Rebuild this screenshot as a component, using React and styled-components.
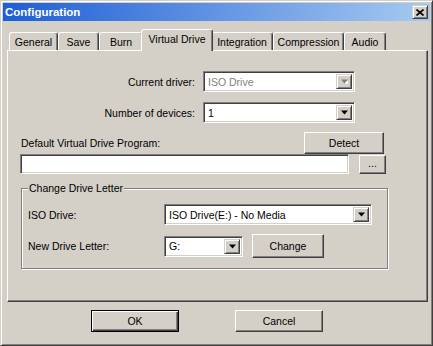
import React from 'react';
import styled, { createGlobalStyle, css } from 'styled-components';

const Global = createGlobalStyle`
  body {
    margin: 0;
    background: #d4d0c8;
  }
`;

const raised = css`
  border: 1px solid;
  border-color: #d4d0c8 #404040 #404040 #d4d0c8;
  box-shadow: inset 1px 1px 0 #fff, inset -1px -1px 0 #808080;
`;

const sunken = css`
  border: 1px solid;
  border-color: #808080 #fff #fff #808080;
  box-shadow: inset 1px 1px 0 #404040, inset -1px -1px 0 #d4d0c8;
`;

const Window = styled.div`
  box-sizing: border-box;
  width: 433px;
  height: 346px;
  padding: 2px;
  display: flex;
  flex-direction: column;
  background: #d4d0c8;
  ${raised};
  font-family: 'Liberation Sans', Arial, sans-serif;
  font-size: 10.5px;
  color: #000;
`;

const TitleBar = styled.div`
  height: 18px;
  display: flex;
  align-items: center;
  justify-content: space-between;
  padding: 0 2px;
  background: linear-gradient(to right, #1d5ed6, #a6caf0);
`;

const Title = styled.span`
  color: #fff;
  font-weight: bold;
  font-size: 11.5px;
`;

const CloseButton = styled.div`
  box-sizing: border-box;
  width: 16px;
  height: 14px;
  display: flex;
  align-items: center;
  justify-content: center;
  background: #d4d0c8;
  ${raised};
`;

const Body = styled.div`
  padding: 8px 2px 0 4px;
  display: flex;
  flex-direction: column;
`;

const TabStrip = styled.div`
  position: relative;
  z-index: 2;
  height: 21px;
  display: flex;
  align-items: flex-end;
  padding-left: 2px;
`;

const Tab = styled.div`
  box-sizing: border-box;
  position: relative;
  width: ${(p) => p.$w}px;
  height: 18px;
  display: flex;
  align-items: center;
  justify-content: center;
  background: #d4d0c8;
  border-top: 1px solid #fff;
  border-left: 1px solid #fff;
  border-right: 1px solid #404040;
  border-radius: 3px 3px 0 0;
  box-shadow: inset -1px 0 0 #808080;
  white-space: nowrap;
  ${(p) =>
    p.$active &&
    css`
      z-index: 1;
      width: ${p.$w + 4}px;
      height: 22px;
      margin: 0 -2px -1px;
      padding-bottom: 3px;
    `}
`;

const Panel = styled.div`
  box-sizing: border-box;
  width: 421px;
  height: 252px;
  padding: 20px 0 0 12px;
  display: flex;
  flex-direction: column;
  border: 1px solid;
  border-color: #fff #404040 #404040 #fff;
  box-shadow: inset -1px -1px 0 #808080;
`;

const FieldRow = styled.div`
  height: 21px;
  display: flex;
  align-items: center;
  margin-top: ${(p) => p.$top || 0}px;
`;

const RightLabel = styled.span`
  width: 175px;
  margin-right: 8px;
  text-align: right;
`;

const Combo = styled.div`
  box-sizing: border-box;
  width: ${(p) => p.$w}px;
  height: 21px;
  padding: 2px;
  display: flex;
  background: #fff;
  ${sunken};
`;

const ComboValue = styled.span`
  flex: 1;
  padding-left: 2px;
  display: flex;
  align-items: center;
  color: ${(p) => (p.$disabled ? '#808080' : '#000')};
`;

const ArrowButton = styled.div`
  box-sizing: border-box;
  width: 16px;
  display: flex;
  align-items: center;
  justify-content: center;
  background: #d4d0c8;
  ${raised};
`;

const ProgramRow = styled.div`
  width: 364px;
  height: 22px;
  margin-top: 9px;
  display: flex;
  align-items: center;
  justify-content: space-between;
`;

const PlainLabel = styled.span`
  padding-left: ${(p) => p.$pad || 0}px;
  width: ${(p) => (p.$w ? `${p.$w}px` : 'auto')};
`;

const Button = styled.div`
  box-sizing: border-box;
  width: ${(p) => p.$w}px;
  height: ${(p) => p.$h || 22}px;
  display: flex;
  align-items: center;
  justify-content: center;
  background: #d4d0c8;
  border: 1px solid;
  border-color: #fff #404040 #404040 #fff;
  box-shadow: inset -1px -1px 0 #808080;
  ${(p) =>
    p.$default &&
    css`
      border-color: #000;
      box-shadow: inset 1px 1px 0 #fff, inset -1px -1px 0 #404040,
        inset -2px -2px 0 #808080;
    `}
`;

const InputRow = styled.div`
  display: flex;
  align-items: flex-start;
  gap: 10px;
  height: 20px;
`;

const TextBox = styled.div`
  box-sizing: border-box;
  width: 329px;
  height: 20px;
  background: #fff;
  ${sunken};
`;

const SmallButton = styled(Button)`
  margin-top: 1px;
  padding-bottom: 3px;
`;

const Group = styled.div`
  position: relative;
  box-sizing: border-box;
  width: 367px;
  height: 81px;
  margin: 14px 0 0 1px;
  padding: 15px 0 0 6px;
  border: 1px solid #808080;
  box-shadow: inset 1px 1px 0 #fff, 1px 1px 0 #fff;
`;

const GroupCaption = styled.span`
  position: absolute;
  top: -7px;
  left: 6px;
  padding: 0 1px;
  background: #d4d0c8;
`;

const GroupRow = styled.div`
  height: ${(p) => p.$h || 21}px;
  display: flex;
  align-items: center;
  margin-top: ${(p) => p.$top || 0}px;
`;

const Spacer = styled.div`
  width: ${(p) => p.$w}px;
`;

const Footer = styled.div`
  display: flex;
  gap: 56px;
  margin-top: 8px;
  padding-left: 84px;
`;

function Arrow({ disabled }) {
  return (
    <svg width="7" height="5" viewBox="0 0 7 5">
      {disabled && <path d="M2 2h7l-3.5 3.5z" fill="#fff" />}
      <path d="M0 0.5h7l-3.5 4z" fill={disabled ? '#808080' : '#000'} />
    </svg>
  );
}

function ComboBox({ width, value, disabled }) {
  return (
    <Combo $w={width}>
      <ComboValue $disabled={disabled}>{value}</ComboValue>
      <ArrowButton>
        <Arrow disabled={disabled} />
      </ArrowButton>
    </Combo>
  );
}

const tabs = [
  ['General', 49],
  ['Save', 41],
  ['Burn', 44],
  ['Virtual Drive', 68],
  ['Integration', 62],
  ['Compression', 71],
  ['Audio', 42],
];

export default function App() {
  return (
    <>
      <Global />
      <Window>
        <TitleBar>
          <Title>Configuration</Title>
          <CloseButton>
            <svg width="8" height="7" viewBox="0 0 8 7">
              <path d="M0.5 0.5l7 6M7.5 0.5l-7 6" stroke="#000" strokeWidth="1.6" />
            </svg>
          </CloseButton>
        </TitleBar>
        <Body>
          <TabStrip>
            {tabs.map(([name, w]) => (
              <Tab key={name} $w={w} $active={name === 'Virtual Drive'}>
                {name}
              </Tab>
            ))}
          </TabStrip>
          <Panel>
            <FieldRow>
              <RightLabel>Current driver:</RightLabel>
              <ComboBox width={152} value="ISO Drive" disabled />
            </FieldRow>
            <FieldRow $top={10}>
              <RightLabel>Number of devices:</RightLabel>
              <ComboBox width={152} value="1" />
            </FieldRow>
            <ProgramRow>
              <PlainLabel $pad={1}>Default Virtual Drive Program:</PlainLabel>
              <Button $w={80}>Detect</Button>
            </ProgramRow>
            <InputRow>
              <TextBox />
              <SmallButton $w={27} $h={19}>...</SmallButton>
            </InputRow>
            <Group>
              <GroupCaption>Change Drive Letter</GroupCaption>
              <GroupRow>
                <PlainLabel $w={136}>ISO Drive:</PlainLabel>
                <ComboBox width={208} value="ISO Drive(E:) - No Media" />
              </GroupRow>
              <GroupRow $h={24} $top={9}>
                <PlainLabel $w={136}>New Drive Letter:</PlainLabel>
                <ComboBox width={79} value="G:" />
                <Spacer $w={9} />
                <Button $w={72} $h={24}>Change</Button>
              </GroupRow>
            </Group>
          </Panel>
          <Footer>
            <Button $w={88} $h={22} $default>OK</Button>
            <Button $w={88} $h={22}>Cancel</Button>
          </Footer>
        </Body>
      </Window>
    </>
  );
}
